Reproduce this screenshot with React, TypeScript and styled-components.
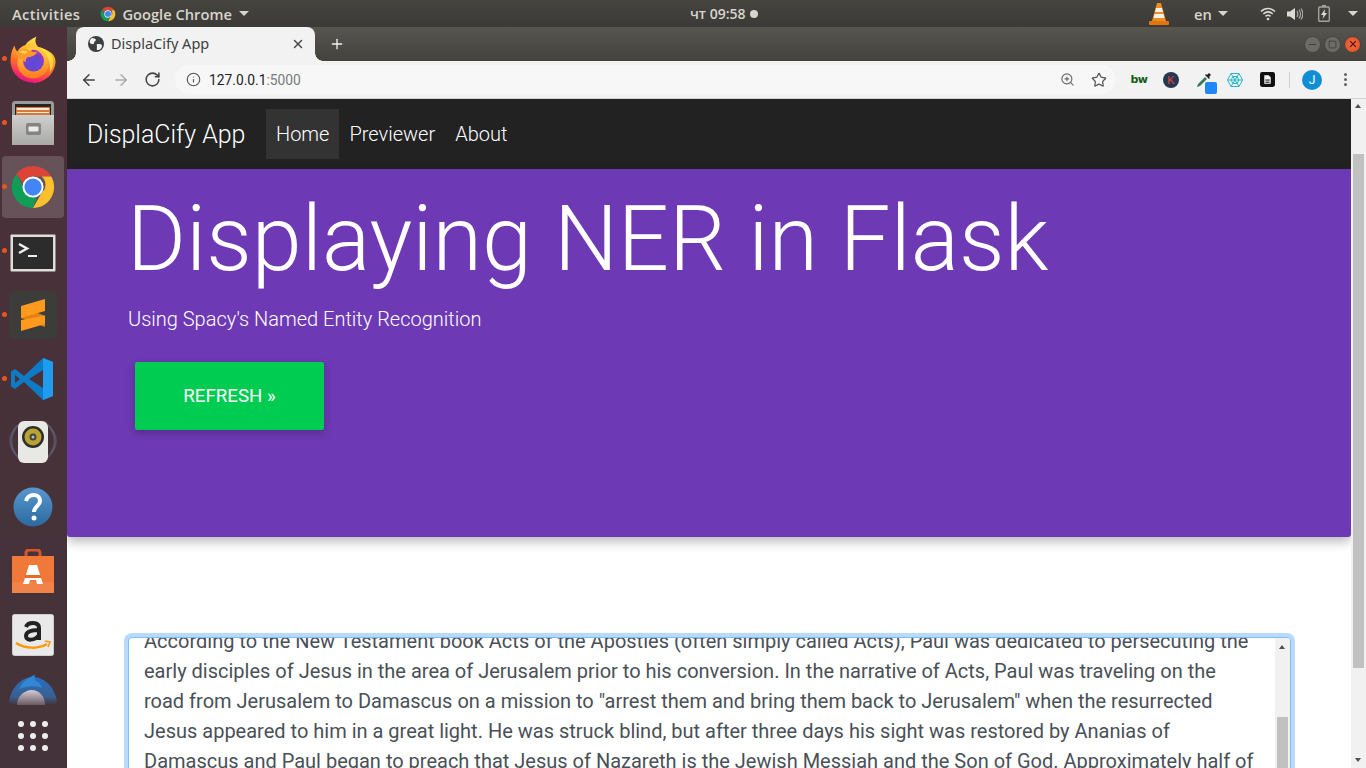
import styled, { createGlobalStyle } from "styled-components";
import { ArrowLeft, ArrowRight, Info, Minus, Plus, RotateCw, Square, Star, X, ZoomIn } from "lucide-react";

const GlobalStyle = createGlobalStyle`
    html, body {
        margin: 0;
        padding: 0;
        width: 1366px;
        height: 768px;
        overflow: hidden;
        background: #fff;
    }
    * {
        box-sizing: border-box;
    }
`;

const Screen = styled.div`
    width: 1366px;
    height: 768px;
    display: flex;
    flex-direction: column;
    overflow: hidden;
    font-family: Roboto, "Liberation Sans", sans-serif;
`;

/* ---------- gnome top bar ---------- */
const TopBar = styled.div`
    flex: 0 0 27px;
    display: flex;
    align-items: center;
    padding-left: 12px;
    background: linear-gradient(#45443f, #3b3a36);
    color: #d8d5cd;
    font-family: "Open Sans", "Noto Sans", sans-serif;
    font-size: 14.7px;
    font-weight: 600;
`;
const TopLeft = styled.div`
    flex: 0 0 678px;
    display: flex;
    align-items: center;
`;
const ActivitiesLabel = styled.span`
    letter-spacing: 0.4px;
`;
const AppMenu = styled.div`
    display: flex;
    align-items: center;
    margin-left: 20px;
    gap: 6px;
`;
const Caret = styled.span`
    display: inline-block;
    width: 0;
    height: 0;
    border-left: 5px solid transparent;
    border-right: 5px solid transparent;
    border-top: 5px solid #d8d5cd;
    margin-left: 1px;
`;
const Clock = styled.div`
    flex: 0 0 459px;
    display: flex;
    align-items: center;
    gap: 4px;
    font-size: 14px;
`;
const ClockDot = styled.span`
    width: 8px;
    height: 8px;
    border-radius: 50%;
    background: #d8d5cd;
`;
const Tray = styled.div`
    display: flex;
    align-items: center;
`;
const LangLabel = styled.span`
    margin-left: 25px;
    display: flex;
    align-items: center;
    gap: 5px;
`;
const TraySlot = styled.span<{ $left: number }>`
    display: flex;
    align-items: center;
    margin-left: ${(p) => p.$left}px;
`;

/* ---------- main row ---------- */
const Desktop = styled.div`
    flex: 1;
    min-height: 0;
    display: flex;
`;
const Dock = styled.div`
    flex: 0 0 67px;
    display: flex;
    flex-direction: column;
    padding-right: 3px;
    background: linear-gradient(#4b3039, #44333a);
`;
const DockRow = styled.div<{ $height?: number }>`
    position: relative;
    flex: 0 0 ${(p) => p.$height ?? 64}px;
    padding: 1px 0 1px 2px;
`;
const DockItem = styled.div<{ $active?: boolean }>`
    height: 100%;
    display: flex;
    align-items: center;
    justify-content: center;
    overflow: hidden;
    border-radius: 4px;
    background: ${(p) => (p.$active ? "rgba(255,255,255,0.16)" : "transparent")};
`;
const RunDot = styled.span`
    position: absolute;
    left: 2px;
    top: 29px;
    width: 5px;
    height: 5px;
    border-radius: 50%;
    background: #e95420;
    z-index: 2;
`;

/* ---------- chrome ---------- */
const Browser = styled.div`
    flex: 1;
    min-width: 0;
    display: flex;
    flex-direction: column;
`;
const TabStrip = styled.div`
    flex: 0 0 34px;
    display: flex;
    align-items: flex-end;
    padding-left: 9px;
    background: linear-gradient(#57554e, #43423d);
`;
const Tab = styled.div`
    position: relative;
    width: 239px;
    height: 34px;
    display: flex;
    align-items: center;
    padding: 0 10px 0 12px;
    background: #f2f2f2;
    border-radius: 8px 8px 0 0;
    color: #3c4043;
    font-family: "Noto Sans", Roboto, sans-serif;
    font-size: 14.5px;
    &::before,
    &::after {
        content: "";
        position: absolute;
        bottom: 0;
        width: 8px;
        height: 8px;
    }
    &::before {
        left: -8px;
        background: radial-gradient(circle at 0 0, transparent 7.5px, #f2f2f2 8px);
    }
    &::after {
        right: -8px;
        background: radial-gradient(circle at 100% 0, transparent 7.5px, #f2f2f2 8px);
    }
`;
const TabTitle = styled.span`
    flex: 1;
    margin: 0 0 2px 7px;
`;
const NewTab = styled.div`
    margin-left: 14px;
    height: 34px;
    display: flex;
    align-items: center;
    color: #f1f1f1;
`;
const WindowButtons = styled.div`
    margin-left: auto;
    height: 34px;
    display: flex;
    align-items: center;
    gap: 3px;
    padding-right: 5px;
`;
const WindowButton = styled.span<{ $close?: boolean }>`
    width: 17px;
    height: 17px;
    border-radius: 50%;
    display: flex;
    align-items: center;
    justify-content: center;
    background: ${(p) => (p.$close ? "radial-gradient(#f0704a, #e2481c)" : "#6d6b65")};
    border: 1px solid #44433e;
`;
const Toolbar = styled.div`
    flex: 0 0 38px;
    display: flex;
    align-items: center;
    padding-left: 13px;
    background: #f2f2f2;
    border-bottom: 1px solid #d4d4d4;
`;
const NavIcons = styled.div`
    display: flex;
    align-items: center;
    gap: 14px;
`;
const Omnibox = styled.div`
    flex: 0 0 941px;
    height: 29px;
    margin-left: 14px;
    padding: 0 9px 0 11px;
    display: flex;
    align-items: center;
    border-radius: 15px;
    background: #f7f7f7;
    font-size: 13.8px;
    color: #202124;
`;
const UrlPort = styled.span`
    color: #777a7e;
`;
const UrlText = styled.span`
    margin-left: 8px;
`;
const OmniActions = styled.div`
    margin-left: auto;
    display: flex;
    align-items: center;
    gap: 16px;
`;
const Extensions = styled.div`
    display: flex;
    align-items: center;
`;
const ExtSlot = styled.span<{ $width: number; $left?: number }>`
    position: relative;
    flex: 0 0 ${(p) => p.$width}px;
    margin-left: ${(p) => p.$left ?? 0}px;
    display: flex;
    align-items: center;
    justify-content: center;
`;
const EyedropBadge = styled.span`
    position: absolute;
    right: 10px;
    bottom: -6px;
    width: 12px;
    height: 12px;
    border-radius: 2px;
    background: #1e88f5;
`;
const KBadge = styled.span`
    width: 16px;
    height: 16px;
    border-radius: 50%;
    background: #26384f;
    color: #e8474c;
    font-size: 11px;
    font-family: "Liberation Sans", sans-serif;
    display: flex;
    align-items: center;
    justify-content: center;
`;
const BwMark = styled.span`
    color: #0f5c12;
    font-family: "DejaVu Sans", sans-serif;
    font-weight: 700;
    font-size: 11px;
    letter-spacing: -0.5px;
`;
const Divider = styled.span`
    width: 1px;
    height: 16px;
    margin: 0 12px 0 6px;
    background: #cfcfcf;
`;
const Avatar = styled.span`
    width: 20px;
    height: 20px;
    border-radius: 50%;
    background: #0f8ed6;
    color: #fff;
    font-size: 12px;
    display: flex;
    align-items: center;
    justify-content: center;
`;
const MenuDots = styled.span`
    margin-left: 22px;
    display: flex;
    flex-direction: column;
    gap: 2px;
    i {
        width: 3px;
        height: 3px;
        border-radius: 50%;
        background: #5f6368;
    }
`;

/* ---------- page ---------- */
const Viewport = styled.div`
    flex: 1;
    min-height: 0;
    display: flex;
`;
const Page = styled.div`
    flex: 1;
    min-width: 0;
    overflow: hidden;
    background: #fff;
`;
const Navbar = styled.nav`
    height: 70px;
    display: flex;
    align-items: center;
    padding-left: 20px;
    background: #222;
    font-weight: 300;
    color: #fff;
`;
const Brand = styled.span`
    flex: 0 0 159px;
    font-size: 24.9px;
    white-space: nowrap;
`;
const NavList = styled.div`
    margin-left: 20px;
    display: flex;
`;
const NavLink = styled.span<{ $active?: boolean }>`
    height: 50px;
    display: flex;
    align-items: center;
    padding: 0 10px;
    font-size: 20px;
    flex: ${(p) => (p.$active ? "0 0 73px" : "none")};
    background: ${(p) => (p.$active ? "#333" : "transparent")};
`;
const Jumbotron = styled.section`
    height: 368px;
    padding: 18px 0 0 61px;
    background: #6e39b5;
    color: #fff;
    border-radius: 0 0 3px 3px;
    box-shadow: 0 4px 12px rgba(0, 0, 0, 0.3);
`;
const Heading = styled.h1`
    margin: 0 0 0 -1px;
    font-size: 90px;
    line-height: 106px;
    font-weight: 300;
    white-space: nowrap;
`;
const Lead = styled.p`
    margin: 11px 0 0;
    font-size: 20px;
    line-height: 30px;
    font-weight: 300;
`;
const RefreshButton = styled.button`
    display: block;
    width: 189px;
    height: 68px;
    margin: 28px 0 0 7px;
    border: 0;
    border-radius: 2px;
    background: #00cc52;
    color: #fff;
    font-family: Roboto, sans-serif;
    font-size: 18.7px;
    box-shadow: 0 3px 8px rgba(0, 0, 0, 0.25);
`;
const TextBox = styled.div`
    display: flex;
    height: 200px;
    margin: 100px 0 0 61px;
    width: 1163px;
    border: 1px solid #80bdff;
    border-radius: 4px;
    box-shadow: 0 0 0 4px #b9dafe;
    overflow: hidden;
    background: #fff;
`;
const TextBody = styled.div`
    flex: 1;
    min-width: 0;
    height: 100%;
    overflow: hidden;
    padding: 0 20px 0 15px;
`;
const Paragraph = styled.p`
    margin: -12px 0 0;
    font-size: 20px;
    line-height: 30px;
    color: #495057;
`;
const ScrollTrack = styled.div<{ $width: number }>`
    position: relative;
    flex: 0 0 ${(p) => p.$width}px;
    background: #f1f1f1;
`;
const ScrollThumb = styled.div<{ $top: number; $height: number }>`
    position: absolute;
    left: 2px;
    right: 2px;
    top: ${(p) => p.$top}px;
    height: ${(p) => p.$height}px;
    background: #c1c1c1;
`;
const ArrowUp = styled.span<{ $top: number }>`
    position: absolute;
    left: 4px;
    top: ${(p) => p.$top}px;
    border-left: 3.5px solid transparent;
    border-right: 3.5px solid transparent;
    border-bottom: 4px solid #505050;
`;
const ArrowDown = styled.span`
    position: absolute;
    left: 4px;
    bottom: 6px;
    border-left: 3.5px solid transparent;
    border-right: 3.5px solid transparent;
    border-top: 4px solid #505050;
`;

const FirefoxIcon = () => (
    <svg width="46" height="47" viewBox="0 0 46 47">
        <defs>
            <linearGradient id="ffa" x1="0.7" y1="0" x2="0.35" y2="1">
                <stop offset="0" stopColor="#fff05a" />
                <stop offset="0.35" stopColor="#ffb52a" />
                <stop offset="0.65" stopColor="#ff6a2c" />
                <stop offset="0.88" stopColor="#f5276a" />
                <stop offset="1" stopColor="#e31587" />
            </linearGradient>
            <linearGradient id="ffr" x1="0.5" y1="0" x2="0.5" y2="1">
                <stop offset="0" stopColor="#ffd23f" />
                <stop offset="1" stopColor="#ff7a1f" />
            </linearGradient>
            <radialGradient id="ffb" cx="0.5" cy="0.6" r="0.55">
                <stop offset="0" stopColor="#5a4ad8" />
                <stop offset="0.7" stopColor="#6f45cf" />
                <stop offset="1" stopColor="#a236b8" />
            </radialGradient>
        </defs>
        <path d="M23 46.500C10 46.500 0.500 36.500 0.500 24.500c0-6 1.500-11 4-15 0.500 3 1.500 5 3 6 1.500-3 4.500-5.500 8-6.500 2-4 6.500-6 11-8.500-2 4-1 8 2 10.500 8 2.500 17 6 17 14.500 0 11-10 21.500-22.500 21.500z" fill="url(#ffa)" />
        <path d="M28 11c7 1 15 6 15 15 0 4-1 7-3 10 1-12-4-20-12-25z" fill="#ffe24a" opacity="0.8" />
        <circle cx="23" cy="27" r="15.500" fill="url(#ffr)" />
        <circle cx="23.500" cy="25" r="10.500" fill="url(#ffb)" />
        <path d="M6 17c4-4 9-5 13-3 3 2 6 3 9 1-2 4-6 6-10 6-2 1-3 3-2 5-4-1-8-4-10-9z" fill="#ff9a2a" />
        <path d="M9 16c3-2 7-2 9 0l-3 2c-2-1-4-1-6-2z" fill="#ffcf5a" />
        <path d="M21 14c3-1 7 0 9 3-2-1-5-1-7-1z" fill="#b33ab5" />
    </svg>
);

const FilesIcon = () => (
    <svg width="42" height="44" viewBox="0 0 42 44">
        <defs>
            <linearGradient id="cab" x1="0" y1="0" x2="0" y2="1">
                <stop offset="0" stopColor="#cfcfcd" />
                <stop offset="1" stopColor="#a9a9a7" />
            </linearGradient>
        </defs>
        <path d="M2 0h38l2 2v40l-2 2H2l-2-2V2z" fill="#9a9a98" />
        <rect x="3" y="3" width="36" height="11" fill="#252525" />
        <rect x="4" y="6" width="34" height="8" fill="#d9773a" />
        <rect x="5" y="7" width="32" height="2" fill="#f3ead8" />
        <rect x="5" y="11" width="32" height="1" fill="#f3ead8" />
        <rect x="0" y="14" width="42" height="30" fill="url(#cab)" />
        <rect x="14" y="22" width="15" height="12" rx="2" fill="#85857f" />
        <rect x="16.500" y="25.500" width="10" height="5" rx="1" fill="#ecece9" />
    </svg>
);

const ChromeIcon = ({ size }: { size: number }) => (
    <svg width={size} height={size} viewBox="0 0 48 48">
        <path d="M24 2a22 22 0 0 1 19.050 11H24a11 11 0 0 0-10.400 7.400L6.500 10.500A22 22 0 0 1 24 2z" fill="#db4437" />
        <path d="M43.050 13A22 22 0 0 1 24 46l9.500-16.500A11 11 0 0 0 33 13z" fill="#fbc02d" />
        <path d="M24 46A22 22 0 0 1 6.500 10.500l9.500 17A11 11 0 0 0 28 34.300z" fill="#0f9d58" />
        <circle cx="24" cy="24" r="11" fill="#fff" />
        <circle cx="24" cy="24" r="9" fill="#4285f4" />
    </svg>
);

const TerminalIcon = () => (
    <svg width="46" height="42" viewBox="0 -4 46 42">
        <rect x="0.500" y="0.500" width="45" height="37" rx="1" fill="#dededb" />
        <rect x="3" y="3" width="40" height="32" fill="#2c2c2c" />
        <path d="M9 10l8 4.500-8 4.500" fill="none" stroke="#eee" strokeWidth="2.500" />
        <rect x="18" y="21" width="9" height="2" fill="#eee" />
    </svg>
);

const SublimeIcon = () => (
    <svg width="48" height="48" viewBox="0 0 48 48">
        <rect width="48" height="48" rx="5" fill="#3c3c3a" />
        <path d="M12 15l24 10v11L12 27z" fill="#e0820f" />
        <path d="M12 15L36 8v12l-24 7z" fill="#ff9a1f" />
        <path d="M36 24.500v8.500l-24 7V29z" fill="#ff9a1f" />
    </svg>
);

const VsCodeIcon = () => (
    <svg width="44" height="44" viewBox="0 0 44 44">
        <path d="M32 1L13 19 4 12 0 14.500v15L4 32l9-7 19 18 10-4V5z" fill="#0e7bc6" />
        <path d="M32 1l10 4v34l-10 4z" fill="#1f9cf0" />
        <path d="M32 13L18 22l14 9z" fill="#47323a" />
        <path d="M4 18l5 4-5 4z" fill="#47323a" />
    </svg>
);

const SpeakerIcon = () => (
    <svg width="48" height="48" viewBox="0 0 48 48">
        <path d="M9 6C0 15 0 29 9 38M39 6c9 9 9 23 0 32" fill="none" stroke="#6a6c84" strokeWidth="2" opacity="0.6" />
        <path d="M6 10C-1 17-1 27 6 34M42 10c7 7 7 17 0 24" fill="none" stroke="#6a6c84" strokeWidth="1.500" opacity="0.35" />
        <rect x="9" y="2" width="30" height="42" rx="6" fill="#e8e8e4" />
        <circle cx="24" cy="18" r="11" fill="#2f2f2c" />
        <circle cx="24" cy="18" r="8.500" fill="#b9a332" />
        <circle cx="24" cy="18" r="3.500" fill="#444" />
        <circle cx="24" cy="18" r="1.500" fill="#bbb" />
    </svg>
);

const HelpIcon = () => (
    <svg width="40" height="40" viewBox="0 0 40 40">
        <defs>
            <linearGradient id="hlp" x1="0" y1="0" x2="0" y2="1">
                <stop offset="0" stopColor="#5a97cf" />
                <stop offset="1" stopColor="#2a6aa0" />
            </linearGradient>
        </defs>
        <circle cx="20" cy="20" r="19.500" fill="url(#hlp)" />
        <path d="M13 14c1-4 4-6 8-6 4 0 6 3 6 6 0 5-6 5-6 11" fill="none" stroke="#fff" strokeWidth="4" />
        <circle cx="21" cy="31" r="2.500" fill="#fff" />
    </svg>
);

const SoftwareIcon = () => (
    <svg width="42" height="44" viewBox="0 0 42 44">
        <path d="M14 9V4c0-2 1-3 3-3h8c2 0 3 1 3 3v5" fill="none" stroke="#d5552a" strokeWidth="3" />
        <rect y="7" width="42" height="37" fill="#f0793a" />
        <rect y="33" width="42" height="11" fill="#f28348" />
        <path d="M17 16h8l6 19h-6l-1-4h-6l-1 4h-6z" fill="#fff" />
        <rect x="13" y="26" width="16" height="3" fill="#e56a2c" />
    </svg>
);

const AmazonIcon = () => (
    <svg width="42" height="42" viewBox="0 0 42 42">
        <rect x="0.500" y="0.500" width="41" height="41" rx="2" fill="#e9e9e9" stroke="#cfcfcf" />
        <path d="M14 13c1-3 4-4 7-4 4 0 6 2 6 5v12M27 16c-7 0-13 1-13 6 0 5 9 5 13-1" fill="none" stroke="#222" strokeWidth="4" />
        <path d="M4 29c9 6 23 6 31 1" fill="none" stroke="#f90" strokeWidth="2.500" />
        <path d="M33 27l5 1-2 5" fill="none" stroke="#f90" strokeWidth="1.500" />
    </svg>
);

const ThunderbirdIcon = () => (
    <svg width="48" height="30" viewBox="0 0 48 30">
        <defs>
            <linearGradient id="tbfade" x1="0" y1="0" x2="0" y2="1">
                <stop offset="0" stopColor="#2a6fc0" />
                <stop offset="0.7" stopColor="#3a5f90" />
                <stop offset="1" stopColor="#44333a" />
            </linearGradient>
            <linearGradient id="tbmail" x1="0" y1="0" x2="0" y2="1">
                <stop offset="0" stopColor="#d4ccd4" />
                <stop offset="1" stopColor="#6b5a62" />
            </linearGradient>
        </defs>
        <path d="M0 30C0 14 12 2 24 2s24 12 24 28z" fill="url(#tbfade)" />
        <path d="M8 30c0-8 6-14 14-15 8 0 14 6 14 15z" fill="url(#tbmail)" />
        <path d="M10 14C14 6 20 2 26 0c-1 3 0 4 1 6 3 1 5 4 6 7-6-3-16-2-23 1z" fill="#2f87d6" />
    </svg>
);

const GridDots = () => (
    <svg width="30" height="30" viewBox="0 0 30 30" fill="#eeeeec">
        {[3, 15, 27].map((y) =>
            [3, 15, 27].map((x) => <circle key={`${x}-${y}`} cx={x} cy={y} r="3" />)
        )}
    </svg>
);

const GlobeIcon = () => (
    <svg width="16" height="16" viewBox="0 0 16 16">
        <circle cx="8" cy="8" r="8" fill="#3c4043" />
        <path d="M4 2c2 0 4 1 4 2s-2 1-2 3-3 1-4 0 0-4 2-5zM10 8c2 0 4 0 4 2s-2 4-4 4-1-2-1-3-1-3 1-3z" fill="#f2f2f2" />
    </svg>
);

const WifiIcon = () => (
    <svg width="16" height="14" viewBox="0 0 16 14" fill="none" stroke="#dcdad3" strokeWidth="1.600">
        <path d="M1 4.500c4-4 10-4 14 0M3.300 7c3-2.800 6.400-2.800 9.400 0M5.500 9.300c1.500-1.300 3.500-1.300 5 0" />
        <circle cx="8" cy="12" r="1.300" fill="#dcdad3" stroke="none" />
    </svg>
);

const VolumeIcon = () => (
    <svg width="16" height="14" viewBox="0 0 16 14">
        <path d="M0 4.500h3L8 1v12L3 9.500H0z" fill="#dcdad3" />
        <path d="M10 4c1 2 1 4 0 6M12 2.500c2 2.500 2 6.500 0 9M14 1.500c2.400 3 2.400 8 0 11" fill="none" stroke="#dcdad3" strokeWidth="1.200" opacity="0.7" />
    </svg>
);

const BatteryIcon = () => (
    <svg width="12" height="17" viewBox="0 0 12 17">
        <rect x="4" y="0" width="4" height="2" fill="#a5a39c" />
        <rect x="0.700" y="2" width="10.600" height="14.300" rx="1" fill="none" stroke="#a5a39c" strokeWidth="1.400" />
        <path d="M7 4L3 10h2.500L4.500 14 9 8H6.500z" fill="#dcdad3" />
    </svg>
);

const VlcIcon = () => (
    <svg width="20" height="22" viewBox="0 0 20 22">
        <path d="M8 0h4l5 18H3z" fill="#f28a1c" />
        <path d="M7 5h6l1 4H6zM5.500 11h9l1 4h-11z" fill="#f4f1ea" />
        <rect x="0" y="18" width="20" height="4" rx="1" fill="#e0760f" />
    </svg>
);

const EyedropperIcon = () => (
    <svg width="16" height="16" viewBox="0 0 16 16">
        <path d="M1 15l1-3 7-7 2 2-7 7z" fill="#3b7a57" />
        <path d="M9 3l4 4 1-1-1-1 2-2-2-2-2 2-1-1z" fill="#222" />
    </svg>
);

const WebIcon = () => (
    <svg width="16" height="16" viewBox="0 0 16 16" fill="none" stroke="#27b9c9" strokeWidth="1">
        <path d="M4 1.500h8L15.500 8 12 14.500H4L.500 8z" />
        <path d="M6 4.500h4L12 8l-2 3.500H6L4 8zM.500 8h15M4 1.500l8 13M12 1.500l-8 13" />
    </svg>
);

const DocIcon = () => (
    <svg width="15" height="15" viewBox="0 0 14 14">
        <rect width="14" height="14" rx="2" fill="#111" />
        <path d="M4 3h4l2 2v6H4z" fill="#fff" />
        <rect x="5" y="7" width="4" height="1" fill="#111" />
        <rect x="5" y="9" width="4" height="1" fill="#111" />
    </svg>
);

const dockItems = [
    { key: "firefox", icon: <FirefoxIcon />, running: true },
    { key: "files", icon: <FilesIcon />, running: true },
    { key: "chrome", icon: <ChromeIcon size={46} />, running: true, active: true },
    { key: "terminal", icon: <TerminalIcon />, running: true },
    { key: "sublime", icon: <SublimeIcon />, running: true },
    { key: "vscode", icon: <VsCodeIcon />, running: true },
    { key: "speaker", icon: <SpeakerIcon /> },
    { key: "help", icon: <HelpIcon /> },
    { key: "software", icon: <SoftwareIcon /> },
    { key: "amazon", icon: <AmazonIcon /> },
    { key: "thunderbird", icon: <ThunderbirdIcon />, height: 46 },
    { key: "apps", icon: <GridDots />, height: 46 },
];

const article = `According to the New Testament book Acts of the Apostles (often simply called Acts), Paul was dedicated to persecuting the early disciples of Jesus in the area of Jerusalem prior to his conversion. In the narrative of Acts, Paul was traveling on the road from Jerusalem to Damascus on a mission to "arrest them and bring them back to Jerusalem" when the resurrected Jesus appeared to him in a great light. He was struck blind, but after three days his sight was restored by Ananias of Damascus and Paul began to preach that Jesus of Nazareth is the Jewish Messiah and the Son of God. Approximately half of`;

function App() {
    return (
        <Screen>
            <GlobalStyle />
            <TopBar>
                <TopLeft>
                    <ActivitiesLabel>Activities</ActivitiesLabel>
                    <AppMenu>
                        <ChromeIcon size={16} />
                        <span>Google Chrome</span>
                        <Caret />
                    </AppMenu>
                </TopLeft>
                <Clock>
                    <span>чт 09:58</span>
                    <ClockDot />
                </Clock>
                <Tray>
                    <VlcIcon />
                    <LangLabel>
                        en
                        <Caret />
                    </LangLabel>
                    <TraySlot $left={32}>
                        <WifiIcon />
                    </TraySlot>
                    <TraySlot $left={11}>
                        <VolumeIcon />
                    </TraySlot>
                    <TraySlot $left={15}>
                        <BatteryIcon />
                    </TraySlot>
                    <TraySlot $left={17}>
                        <Caret />
                    </TraySlot>
                </Tray>
            </TopBar>
            <Desktop>
                <Dock>
                    {dockItems.map((item) => (
                        <DockRow key={item.key} $height={item.height}>
                            {item.running && <RunDot />}
                            <DockItem $active={item.active}>{item.icon}</DockItem>
                        </DockRow>
                    ))}
                </Dock>
                <Browser>
                    <TabStrip>
                        <Tab>
                            <GlobeIcon />
                            <TabTitle>DisplaCify App</TabTitle>
                            <X size={14} strokeWidth={2.5} color="#444" />
                        </Tab>
                        <NewTab>
                            <Plus size={16} strokeWidth={2} />
                        </NewTab>
                        <WindowButtons>
                            <WindowButton>
                                <Minus size={11} strokeWidth={2} color="#3a3935" />
                            </WindowButton>
                            <WindowButton>
                                <Square size={9} strokeWidth={2} color="#3a3935" />
                            </WindowButton>
                            <WindowButton $close>
                                <X size={10} strokeWidth={3} color="#5c1a08" />
                            </WindowButton>
                        </WindowButtons>
                    </TabStrip>
                    <Toolbar>
                        <NavIcons>
                            <ArrowLeft size={18} strokeWidth={2} color="#444" />
                            <ArrowRight size={18} strokeWidth={2} color="#aaa" />
                            <RotateCw size={17} strokeWidth={2.2} color="#444" />
                        </NavIcons>
                        <Omnibox>
                            <Info size={15} strokeWidth={1.8} color="#555" />
                            <UrlText>
                                127.0.0.1<UrlPort>:5000</UrlPort>
                            </UrlText>
                            <OmniActions>
                                <ZoomIn size={15} strokeWidth={1.8} color="#666" />
                                <Star size={16} strokeWidth={1.8} color="#555" />
                            </OmniActions>
                        </Omnibox>
                        <Extensions>
                            <ExtSlot $width={46}>
                                <BwMark>bw</BwMark>
                            </ExtSlot>
                            <ExtSlot $width={18}>
                                <KBadge>K</KBadge>
                            </ExtSlot>
                            <ExtSlot $width={47}>
                                <EyedropperIcon />
                                <EyedropBadge />
                            </ExtSlot>
                            <ExtSlot $width={16}>
                                <WebIcon />
                            </ExtSlot>
                            <ExtSlot $width={32} $left={8}>
                                <DocIcon />
                            </ExtSlot>
                        </Extensions>
                        <Divider />
                        <Avatar>J</Avatar>
                        <MenuDots>
                            <i />
                            <i />
                            <i />
                        </MenuDots>
                    </Toolbar>
                    <Viewport>
                        <Page>
                            <Navbar>
                                <Brand>DisplaCify App</Brand>
                                <NavList>
                                    <NavLink $active>Home</NavLink>
                                    <NavLink>Previewer</NavLink>
                                    <NavLink>About</NavLink>
                                </NavList>
                            </Navbar>
                            <Jumbotron>
                                <Heading>Displaying NER in Flask</Heading>
                                <Lead>Using Spacy's Named Entity Recognition</Lead>
                                <RefreshButton>REFRESH »</RefreshButton>
                            </Jumbotron>
                            <TextBox>
                                <TextBody>
                                    <Paragraph>{article}</Paragraph>
                                </TextBody>
                                <ScrollTrack $width={15}>
                                    <ArrowUp $top={7} />
                                    <ScrollThumb $top={79} $height={120} />
                                </ScrollTrack>
                            </TextBox>
                        </Page>
                        <ScrollTrack $width={15}>
                            <ArrowUp $top={5} />
                            <ScrollThumb $top={55} $height={514} />
                            <ArrowDown />
                        </ScrollTrack>
                    </Viewport>
                </Browser>
            </Desktop>
        </Screen>
    );
}

export default App;
